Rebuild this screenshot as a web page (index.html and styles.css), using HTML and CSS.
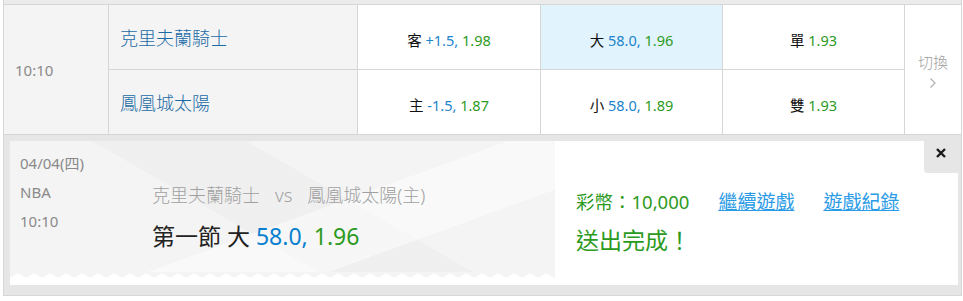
FILE: index.html
```html
<!DOCTYPE html>
<html lang="zh-TW">
<head>
    <meta charset="UTF-8">
    <meta name="viewport" content="width=device-width, initial-scale=1.0">
    <title>投注確認</title>
    <link rel="stylesheet" href="styles.css">
</head>
<body>
    <div class="board">
        <div class="topband"></div>
        <div class="odds">
            <div class="cell time">10:10</div>
            <div class="cell team">克里夫蘭騎士</div>
            <div class="cell bet"><span>客 <span class="blue">+1.5,</span> <span class="green">1.98</span></span></div>
            <div class="cell bet on"><span>大 <span class="blue">58.0,</span> <span class="green">1.96</span></span></div>
            <div class="cell bet"><span>單 <span class="green">1.93</span></span></div>
            <div class="cell switch">
                <span>切換</span>
                <svg class="arrow" width="8" height="12" viewBox="0 0 8 12"><path d="M1.5 1.5L6 6L1.5 10.5" fill="none" stroke="#b0b0b0" stroke-width="1.2"/></svg>
            </div>
            <div class="cell team">鳳凰城太陽</div>
            <div class="cell bet"><span>主 <span class="blue">-1.5,</span> <span class="green">1.87</span></span></div>
            <div class="cell bet"><span>小 <span class="blue">58.0,</span> <span class="green">1.89</span></span></div>
            <div class="cell bet"><span>雙 <span class="green">1.93</span></span></div>
        </div>

        <div class="result">
            <div class="box">
                <div class="ticket">
                    <div class="ticket-main">
                        <div class="meta">
                            <div>04/04(四)</div>
                            <div>NBA</div>
                            <div>10:10</div>
                        </div>
                        <div class="pick">
                            <div class="match">克里夫蘭騎士<span class="vs">vs</span>鳳凰城太陽(主)</div>
                            <div class="choice">第一節 大 <span class="blue">58.0,</span> <span class="green">1.96</span></div>
                        </div>
                    </div>
                    <svg class="zigzag" width="545" height="6">
                        <defs>
                            <pattern id="zz" width="16" height="6" patternUnits="userSpaceOnUse">
                                <path d="M0 6L8 1L16 6Z" fill="#fff"/>
                            </pattern>
                        </defs>
                        <rect width="545" height="6" fill="url(#zz)"/>
                    </svg>
                </div>
                <div class="done">
                    <div class="coins">
                        <span>彩幣：10,000</span>
                        <a href="#">繼續遊戲</a>
                        <a href="#">遊戲紀錄</a>
                    </div>
                    <div class="msg">送出完成！</div>
                </div>
                <span class="close">
                    <svg width="10" height="10" viewBox="0 0 10 10"><path d="M1 1L9 9M9 1L1 9" stroke="#1a1a1a" stroke-width="2.4"/></svg>
                </span>
            </div>
        </div>
    </div>
</body>
</html>
```

FILE: styles.css
```css
body { margin: 0; background: #fff; font-family: "Noto Sans", "Noto Sans CJK TC", sans-serif; }
.board { width: 959px; margin-left: 3px; }
.topband { height: 4px; background: #ebebeb; border-left: 1px solid #d6d6d6; border-right: 1px solid #d6d6d6; }

.odds { display: grid; grid-template-columns: 104px 248px 182px 181px 181px 56px; grid-template-rows: 64px 64px; gap: 1px; padding: 1px; background: #d6d6d6; }
.cell { display: flex; align-items: center; background: #fff; }
.time { grid-row: span 2; background: #f4f4f4; padding-left: 11px; padding-top: 1px; font-size: 15px; color: #8a8a8a; }
.team { background: #f4f4f4; padding-left: 11px; padding-top: 0; font-size: 18px; font-weight: 300; color: #1a6aa6; }
.bet { justify-content: center; padding-top: 5px; font-size: 14.5px; color: #111; }
.bet.on { background: #e1f3fc; }
.switch { grid-row: span 2; flex-direction: column; justify-content: center; gap: 5px; padding-top: 1px; font-size: 15px; font-weight: 300; line-height: 20px; color: #a0a0a0; }
.switch .arrow { display: block; }
.blue { color: #1a84cc; }
.green { color: #2c9a1e; }

.result { border: 1px solid #d6d6d6; border-top: none; background: #e6e6e6; padding: 6px 3px 10px 6px; }
.box { position: relative; display: flex; height: 144px; background: #fff; }
.ticket { width: 545px; display: flex; flex-direction: column; }
.ticket-main { height: 131px; display: flex; background: #f4f4f4; background-image: linear-gradient(160deg, transparent 55%, rgba(255,255,255,0.45) 55%, rgba(255,255,255,0.45) 75%, transparent 75%), linear-gradient(30deg, transparent 40%, rgba(235,235,235,0.5) 40%, rgba(235,235,235,0.5) 60%, transparent 60%); }
.zigzag { display: block; background: #f4f4f4; }
.meta { width: 142px; padding: 8px 0 0 10px; box-sizing: border-box; font-size: 15px; line-height: 29px; color: #8a8a8a; }
.pick { padding-top: 40px; }
.match { font-size: 18px; line-height: 28px; font-weight: 300; color: #a0a0a0; }
.match .vs { margin: 0 15px; font-size: 18.5px; }
.choice { margin-top: 11px; font-size: 23px; line-height: 32px; color: #222; }
.choice .blue { color: #0a7fd0; }

.done { padding: 47px 0 0 21px; }
.coins { display: flex; gap: 29px; font-size: 18.5px; line-height: 28px; color: #2c9a1e; }
.coins a { font-size: 19px; color: #2a9be6; text-decoration: underline; }
.msg { margin-top: 8px; font-size: 23px; line-height: 32px; color: #2c9a1e; }
.close { position: absolute; top: 0; right: 0; width: 34px; height: 32px; display: flex; align-items: center; justify-content: center; padding-bottom: 8px; box-sizing: border-box; background: #e6e6e6; border-bottom-left-radius: 4px; }
```
